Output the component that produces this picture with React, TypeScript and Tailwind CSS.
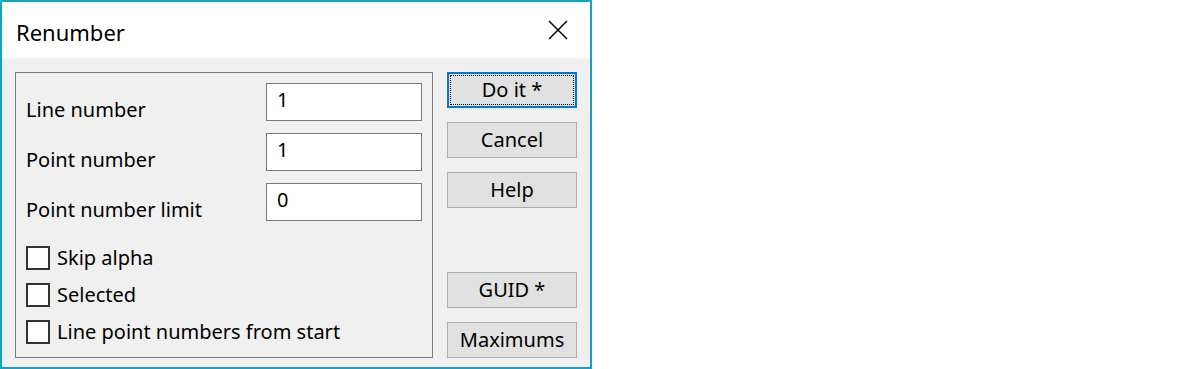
import { useState } from "react";

const font = { fontFamily: '"Noto Sans", "Open Sans", sans-serif' };

function Field({ label, value }: { label: string; value: string }) {
  return (
    <div className="flex items-start justify-between h-[38px]">
      <span className="mt-[17px] leading-[20px]">{label}</span>
      <div className="w-[156px] h-[38px] bg-white border border-[#7a7a7a] pl-[10px] pt-[6px] leading-[20px]">
        {value}
      </div>
    </div>
  );
}

function Check({ label }: { label: string }) {
  const [on, setOn] = useState(false);
  return (
    <label className="flex items-center h-[24px] gap-[7px] cursor-default" onClick={() => setOn(!on)}>
      <span className="w-[24px] h-[24px] border-2 border-[#333333] bg-white flex items-center justify-center">
        {on && (
          <svg width="16" height="16" viewBox="0 0 16 16">
            <path d="M2 8l4 4 8-9" stroke="#333" strokeWidth="2" fill="none" />
          </svg>
        )}
      </span>
      <span className="leading-[20px]">{label}</span>
    </label>
  );
}

function Button({ children, focused = false }: { children: string; focused?: boolean }) {
  if (focused) {
    return (
      <button className="w-[130px] h-[36px] shrink-0 bg-[#e1e1e1] border-2 border-[#0078d7] p-[1px]">
        <span className="flex items-center justify-center w-full h-full border border-dotted border-black leading-[20px]">
          {children}
        </span>
      </button>
    );
  }
  return (
    <button className="w-[130px] h-[36px] shrink-0 bg-[#e1e1e1] border border-[#adadad] flex items-center justify-center leading-[20px]">
      {children}
    </button>
  );
}

export default function App() {
  return (
    <div className="w-[1200px] h-[369px] bg-white text-black text-[20px]" style={font}>
      <div className="w-[592px] h-[369px] border-2 border-[#18a0c4] flex flex-col">
        {/* Titelleiste */}
        <div className="h-[56px] shrink-0 bg-white flex items-center justify-between pl-[14px] pr-[22px]">
          <span className="text-[22px] leading-[22px] mt-[4px]">Renumber</span>
          <svg width="20" height="20" viewBox="0 0 20 20" className="mt-[-1px]">
            <path d="M1 1L19 19M19 1L1 19" stroke="#000" strokeWidth="1.5" fill="none" />
          </svg>
        </div>
        {/* Inhalt */}
        <div className="flex-1 bg-[#f0f0f0] flex items-start pl-[13px] pt-[14px] gap-[14px]">
          <div className="w-[418px] h-[286px] shrink-0 border border-[#7a7a7a] pl-[10px] pr-[10px] pt-[10px] flex flex-col">
            <div className="flex flex-col gap-[12px]">
              <Field label="Line number" value="1" />
              <Field label="Point number" value="1" />
              <Field label="Point number limit" value="0" />
            </div>
            <div className="flex flex-col gap-[13px] mt-[25px]">
              <Check label="Skip alpha" />
              <Check label="Selected" />
              <Check label="Line point numbers from start" />
            </div>
          </div>
          <div className="flex flex-col gap-[14px]">
            <Button focused>Do it *</Button>
            <Button>Cancel</Button>
            <Button>Help</Button>
            <div className="h-[36px]" />
            <Button>GUID *</Button>
            <Button>Maximums</Button>
          </div>
        </div>
      </div>
    </div>
  );
}
